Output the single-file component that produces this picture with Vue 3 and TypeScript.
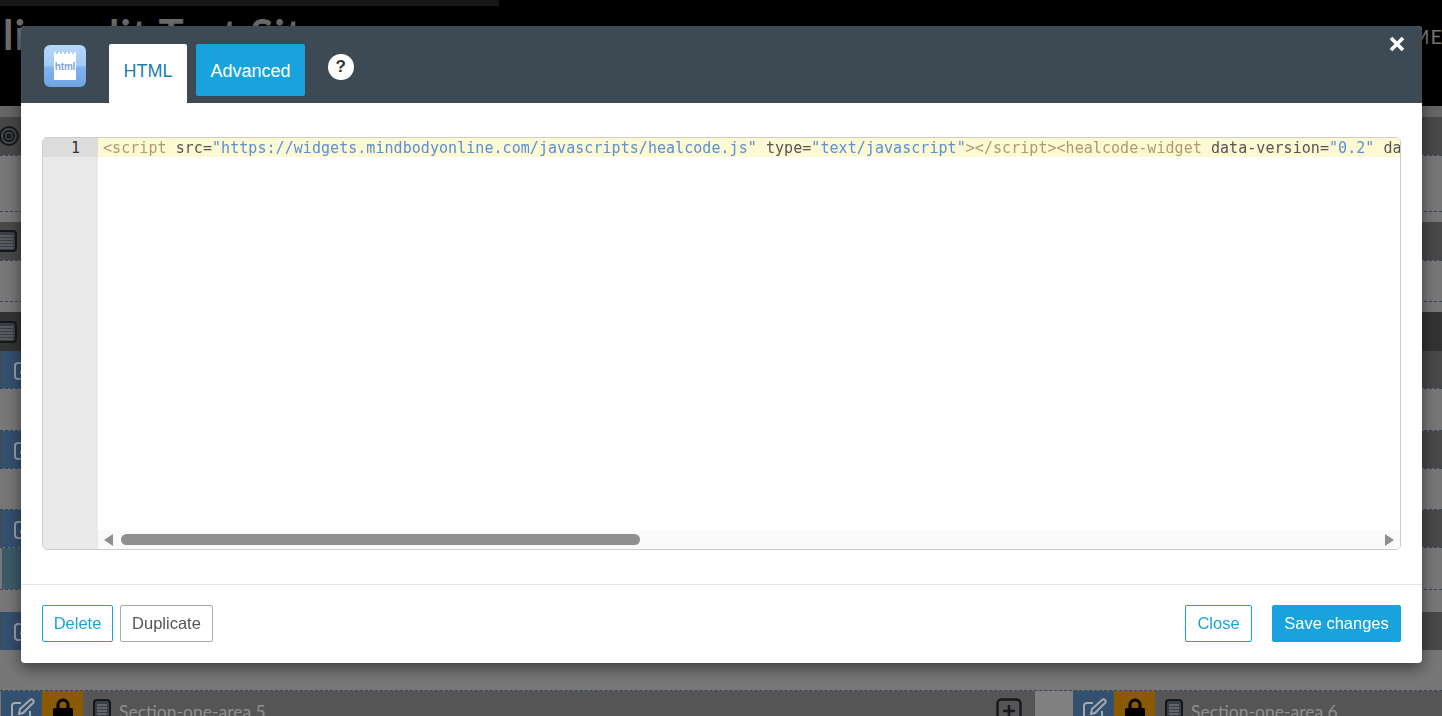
<script setup lang="ts">
interface Band {
  kind: string
  height: number
  icon?: 'target' | 'note'
  edit?: boolean
}

const bands: Band[] = [
  { kind: 'pale', height: 11 },
  { kind: 'dark', height: 38, icon: 'target' },
  { kind: 'gray dash-top', height: 56 },
  { kind: 'gray dash-top', height: 11 },
  { kind: 'dark', height: 38, icon: 'note' },
  { kind: 'gray dash-top', height: 41 },
  { kind: 'gray dash-top', height: 11 },
  { kind: 'darker', height: 39, icon: 'note' },
  { kind: 'dark', height: 37, edit: true },
  { kind: 'gray dash-both', height: 43 },
  { kind: 'dark', height: 37, edit: true },
  { kind: 'gray dash-both', height: 42 },
  { kind: 'dark', height: 37, edit: true },
  { kind: 'teal dash-both', height: 43 },
  { kind: 'gray', height: 22 },
  { kind: 'dark', height: 38, edit: true },
  { kind: 'gray', height: 40 }
]
</script>

<template>
  <div class="page">
    <header class="site-header">
      <div class="top-strip"></div>
      <div class="site-title-row">
        <span class="site-title">liveedit Test Site</span>
        <span class="site-menu">ME</span>
      </div>
    </header>

    <div
      v-for="(b, i) in bands"
      :key="i"
      class="band"
      :class="b.kind"
      :style="{ height: b.height + 'px' }"
    >
      <span v-if="b.edit" class="bg-edit">
        <svg width="22" height="22" viewBox="0 0 22 22" fill="none" stroke="#9aa0a6" stroke-width="2">
          <path d="M10 4H5a3 3 0 0 0-3 3v10a3 3 0 0 0 3 3h10a3 3 0 0 0 3-3v-5" />
          <path d="M8 14l1-4 9-8 3 3-9 9z" />
        </svg>
      </span>
      <svg v-if="b.icon === 'target'" class="bg-glyph target" width="22" height="22" viewBox="0 0 22 22" fill="none" stroke="#14181d" stroke-width="2">
        <circle cx="9" cy="11" r="9" />
        <circle cx="9" cy="11" r="5" />
        <circle cx="9" cy="11" r="1.6" />
      </svg>
      <svg v-if="b.icon === 'note'" class="bg-glyph" width="18" height="22" viewBox="0 0 18 22" fill="none">
        <rect x="-3" y="1" width="19" height="20" rx="3" fill="#3a3f45" stroke="#14181d" stroke-width="2" />
        <path d="M0 6h13M0 9h13M0 12h13M0 15h13M0 18h13" stroke="#777" stroke-width="1.2" />
      </svg>
    </div>

    <div class="area-row">
      <div class="area area-left">
        <span class="cell-edit">
          <svg width="26" height="26" viewBox="0 0 26 26" fill="none" stroke="#a4a9ae" stroke-width="2">
            <path d="M12 6H6a3 3 0 0 0-3 3v12a3 3 0 0 0 3 3h12a3 3 0 0 0 3-3v-7" />
            <path d="M10 17l1-5 10-9a2 2 0 0 1 3 3l-10 10z" />
          </svg>
        </span>
        <span class="cell-lock">
          <svg width="20" height="24" viewBox="0 0 20 24">
            <path d="M5 11V7a5 5 0 0 1 10 0v4" fill="none" stroke="#000" stroke-width="3" />
            <rect x="0" y="10" width="20" height="14" rx="2" fill="#000" />
          </svg>
        </span>
        <svg class="cell-note" width="18" height="24" viewBox="0 0 18 24">
          <rect x="1" y="1" width="16" height="22" rx="3" fill="#3a3f45" stroke="#14181d" stroke-width="2" />
          <path d="M4 6h10M4 9h10M4 12h10M4 15h10M4 18h10" stroke="#8a8a8a" stroke-width="1.2" />
        </svg>
        <span class="area-name">Section-one-area 5</span>
        <span class="plus-box">
          <svg width="26" height="24" viewBox="0 0 26 24" fill="none">
            <rect x="1.5" y="1.5" width="23" height="24" rx="4" stroke="#14181d" stroke-width="2.4" />
            <path d="M13 7v12M7 13h12" stroke="#14181d" stroke-width="2.6" />
          </svg>
        </span>
      </div>
      <div class="area-gap"></div>
      <div class="area area-right">
        <span class="cell-edit">
          <svg width="26" height="26" viewBox="0 0 26 26" fill="none" stroke="#a4a9ae" stroke-width="2">
            <path d="M12 6H6a3 3 0 0 0-3 3v12a3 3 0 0 0 3 3h12a3 3 0 0 0 3-3v-7" />
            <path d="M10 17l1-5 10-9a2 2 0 0 1 3 3l-10 10z" />
          </svg>
        </span>
        <span class="cell-lock">
          <svg width="20" height="24" viewBox="0 0 20 24">
            <path d="M5 11V7a5 5 0 0 1 10 0v4" fill="none" stroke="#000" stroke-width="3" />
            <rect x="0" y="10" width="20" height="14" rx="2" fill="#000" />
          </svg>
        </span>
        <svg class="cell-note" width="18" height="24" viewBox="0 0 18 24">
          <rect x="1" y="1" width="16" height="22" rx="3" fill="#3a3f45" stroke="#14181d" stroke-width="2" />
          <path d="M4 6h10M4 9h10M4 12h10M4 15h10M4 18h10" stroke="#8a8a8a" stroke-width="1.2" />
        </svg>
        <span class="area-name">Section-one-area 6</span>
      </div>
    </div>

    <div class="modal-layer">
      <div class="modal">
        <div class="modal-head">
          <div class="app-icon">
            <div class="app-note">html</div>
          </div>
          <div class="tab tab-active">HTML</div>
          <div class="tab tab-blue">Advanced</div>
          <div class="help">?</div>
          <svg class="close-x" width="18" height="18" viewBox="0 0 18 18">
            <path d="M3 3l12 12M15 3L3 15" stroke="#fff" stroke-width="3.6" />
          </svg>
        </div>

        <div class="modal-body">
          <div class="editor">
            <div class="gutter">
              <div class="gutter-active">1</div>
            </div>
            <div class="code-pane">
              <div class="code-line"><span class="tag">&lt;script</span> <span class="attr">src=</span><span class="str">"https://widgets.mindbodyonline.com/javascripts/healcode.js"</span> <span class="attr">type=</span><span class="str">"text/javascript"</span><span class="tag">&gt;&lt;/script&gt;&lt;healcode-widget</span> <span class="attr">data-version=</span><span class="str">"0.2"</span> <span class="attr">da</span></div>
              <div class="code-space"></div>
              <div class="hscroll">
                <span class="arrow arrow-left"></span>
                <span class="track"><span class="thumb"></span></span>
                <span class="arrow arrow-right"></span>
              </div>
            </div>
          </div>
        </div>

        <div class="modal-foot">
          <button class="btn btn-outline">Delete</button>
          <button class="btn btn-plain">Duplicate</button>
          <span class="foot-spacer"></span>
          <button class="btn btn-outline btn-close">Close</button>
          <button class="btn btn-solid">Save changes</button>
        </div>
      </div>
    </div>
  </div>
</template>

<style scoped>
.page {
  width: 1442px;
  height: 716px;
  overflow: hidden;
  background: #777;
  font-family: "Liberation Sans", Arial, sans-serif;
}

.site-header {
  height: 106px;
  background: #000;
  overflow: hidden;
}
.top-strip {
  width: 499px;
  height: 6px;
  background: #171717;
}
.site-title-row {
  display: flex;
  justify-content: space-between;
  align-items: flex-start;
  padding-left: 3px;
}
.site-title {
  font-family: Lato, sans-serif;
  font-weight: 700;
  font-size: 42px;
  line-height: 50px;
  letter-spacing: 1px;
  color: #6e6e6e;
  margin-top: 3px;
}
.site-menu {
  font-family: Lato, sans-serif;
  font-size: 20px;
  line-height: 60px;
  letter-spacing: 1px;
  color: #777;
  white-space: nowrap;
  margin-right: -1px;
}

.band {
  position: relative;
  box-sizing: border-box;
  overflow: hidden;
  display: flex;
  align-items: center;
}
.pale { background: #666; }
.dark { background: #484848; }
.darker { background: #333; }
.gray { background: #777; }
.teal { background: #777; }
.dash-top { border-top: 1px dashed #34465c; }
.dash-both { border-top: 1px dashed #34465c; border-bottom: 1px dashed #34465c; }
.teal::before {
  content: "";
  position: absolute;
  left: 2px;
  top: 0;
  bottom: 0;
  width: 40px;
  background: #3d5a6a;
}
.bg-edit {
  display: flex;
  align-items: center;
  width: 41px;
  height: 100%;
  margin-left: 1px;
  padding-left: 12px;
  box-sizing: border-box;
  background: #34506f;
}
.bg-glyph { flex: none; }

.area-row {
  display: flex;
  height: 26px;
  padding-left: 1px;
  border-top: 1px dashed #34465c;
  box-sizing: border-box;
}
.area {
  display: flex;
  align-items: flex-start;
  background: #555;
  height: 100%;
}
.area-left { width: 1034px; }
.area-gap { width: 38px; background: #808080; }
.area-right { flex: 1; }
.cell-edit {
  width: 41px;
  height: 100%;
  background: #34506f;
  flex: none;
  display: flex;
  justify-content: center;
  padding-top: 6px;
  box-sizing: border-box;
}
.cell-lock {
  width: 41px;
  height: 100%;
  background: #8a5a00;
  flex: none;
  display: flex;
  justify-content: center;
  padding-top: 7px;
  box-sizing: border-box;
}
.cell-note {
  margin: 8px 9px 0 10px;
  flex: none;
}
.area-name {
  font-family: Lato, sans-serif;
  font-size: 17.5px;
  line-height: 41px;
  color: #8f8f8f;
  white-space: nowrap;
  margin-left: -1px;
}
.plus-box {
  margin-left: auto;
  margin-right: 13px;
  padding-top: 7px;
}

.modal-layer {
  position: fixed;
  inset: 0;
  padding: 26px 20px 0 21px;
  box-sizing: border-box;
}
.modal {
  height: 637px;
  background: #fff;
  border-radius: 4px;
  box-shadow: 0 5px 15px rgba(0, 0, 0, 0.5);
  display: flex;
  flex-direction: column;
}

.modal-head {
  position: relative;
  height: 77px;
  flex: none;
  box-sizing: border-box;
  background: #3d4a54;
  border-radius: 4px 4px 0 0;
  display: flex;
  align-items: flex-start;
  padding: 18px 0 0 23px;
}
.app-icon {
  width: 42px;
  height: 42px;
  margin-top: 1px;
  border-radius: 6px;
  background: linear-gradient(#b6d6f8 0, #a3caf4 50%, #82b4ec 52%, #6fa5e4 100%);
  display: flex;
  align-items: center;
  justify-content: center;
}
.app-note {
  width: 22px;
  height: 28px;
  background:
    repeating-linear-gradient(90deg, #fff 0 2px, transparent 2px 4px) top left / 100% 2px no-repeat,
    linear-gradient(#fff, #fff) bottom / 100% 26px no-repeat;
  border-radius: 1px;
  font-family: "Liberation Sans", Arial, sans-serif;
  font-size: 10px;
  font-weight: 700;
  letter-spacing: -0.2px;
  line-height: 30px;
  text-align: center;
  color: #7fa6dc;
}
.tab {
  height: 52px;
  font-size: 18px;
  display: flex;
  align-items: center;
  justify-content: center;
  box-sizing: border-box;
  padding-top: 2px;
}
.tab-active {
  width: 78px;
  height: 59px;
  margin-left: 23px;
  padding-bottom: 7px;
  background: #fff;
  color: #1a7fb0;
  border-radius: 2px 2px 0 0;
}
.tab-blue {
  width: 109px;
  margin-left: 9px;
  background: #19a3dd;
  color: #fff;
  border-radius: 2px;
}
.help {
  width: 25.5px;
  height: 26px;
  margin: 10px 0 0 23px;
  border-radius: 50%;
  background: #fff;
  color: #333;
  font-size: 17px;
  font-weight: 700;
  line-height: 26px;
  text-align: center;
}
.close-x {
  position: absolute;
  right: 16px;
  top: 9px;
}

.modal-body {
  flex: none;
  padding: 34px 21px;
}
.editor {
  height: 413px;
  box-sizing: border-box;
  border: 1px solid #ccc;
  border-radius: 5px;
  overflow: hidden;
  display: flex;
  background: #fff;
}
.gutter {
  width: 55px;
  flex: none;
  background: #e9e9e9;
}
.gutter-active {
  height: 19px;
  background: #dcdcdc;
  font-family: "DejaVu Sans Mono", monospace;
  font-size: 15px;
  line-height: 19px;
  color: #333;
  text-align: right;
  padding: 1px 18px 0 0;
  box-sizing: border-box;
}
.code-line {
  height: 19px;
  box-sizing: border-box;
  background: #fdf9d3;
  font-family: "DejaVu Sans Mono", monospace;
  font-size: 15px;
  line-height: 19px;
  letter-spacing: 0.05px;
  padding: 1px 0 0 5px;
  white-space: pre;
  overflow: hidden;
  color: #555;
}
.code-pane {
  flex: 1;
  min-width: 0;
  display: flex;
  flex-direction: column;
}
.tag { color: #b09a70; }
.attr { color: #555; }
.str { color: #5b8fd6; }
.code-space { flex: 1; }
.hscroll {
  height: 19px;
  background: #fafafa;
  display: flex;
  align-items: center;
  padding: 0 6px 0 6px;
}
.track {
  flex: 1;
  padding: 0 8px;
}
.thumb {
  display: block;
  width: 519px;
  height: 11px;
  border-radius: 6px;
  background: #8f8f8f;
}
.arrow {
  width: 0;
  height: 0;
  border-top: 6px solid transparent;
  border-bottom: 6px solid transparent;
}
.arrow-left { border-right: 9px solid #8f8f8f; }
.arrow-right { border-left: 9px solid #8f8f8f; }

.modal-foot {
  flex: 1;
  border-top: 1px solid #e5e5e5;
  display: flex;
  align-items: flex-start;
  padding: 20px 21px 0;
}
.btn {
  height: 37px;
  box-sizing: border-box;
  font-family: "Liberation Sans", Arial, sans-serif;
  font-size: 16.5px;
  border-radius: 2px;
  background: #fff;
  padding: 0;
  cursor: pointer;
}
.btn-outline {
  width: 71px;
  color: #19a3dd;
  border: 1px solid #19a3dd;
}
.btn-plain {
  width: 93px;
  margin-left: 7px;
  color: #555;
  border: 1px solid #aaa;
}
.foot-spacer { flex: 1; }
.btn-close { width: 67px; }
.btn-solid {
  width: 129px;
  margin-left: 20px;
  background: #19a3dd;
  border: 1px solid #19a3dd;
  color: #fff;
}
</style>
